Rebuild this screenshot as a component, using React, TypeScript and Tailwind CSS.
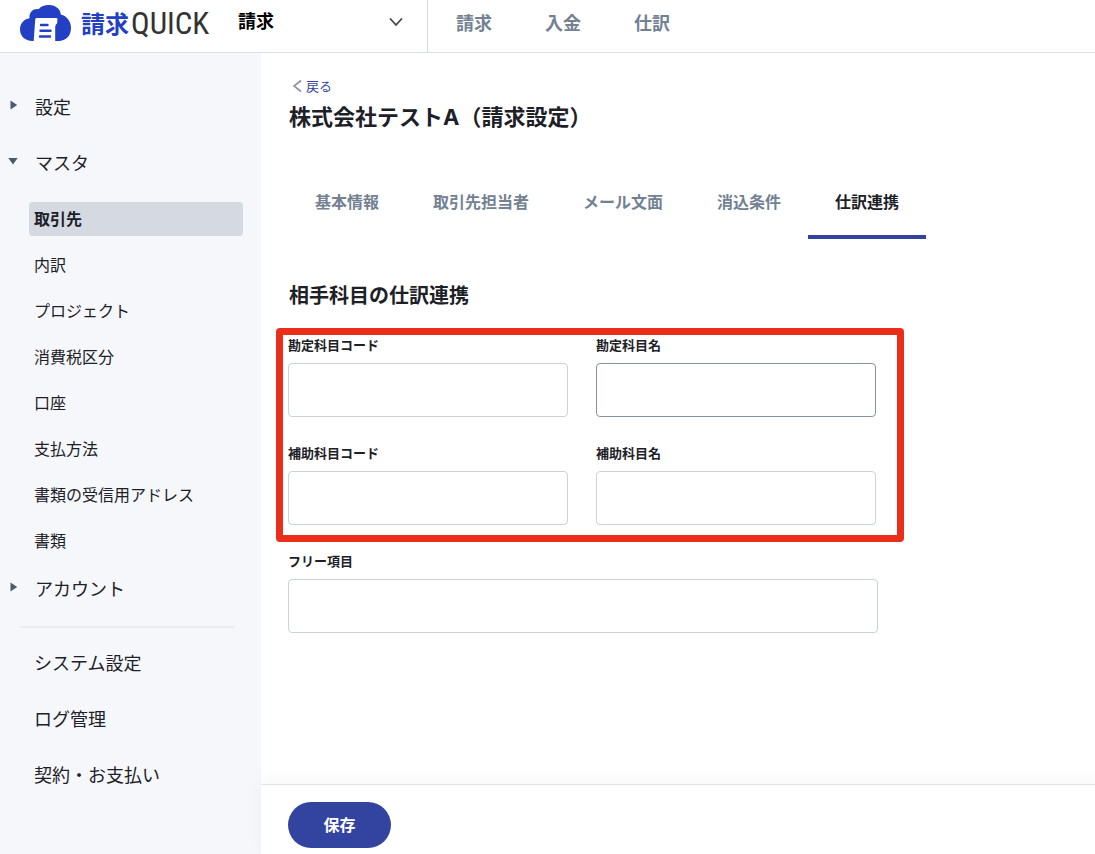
import { useState } from "react";

const masterItems = [
  "取引先",
  "内訳",
  "プロジェクト",
  "消費税区分",
  "口座",
  "支払方法",
  "書類の受信用アドレス",
  "書類",
];

const tabs = ["基本情報", "取引先担当者", "メール文面", "消込条件", "仕訳連携"];

function Logo() {
  return (
    <a href="#" aria-label="請求QUICK" className="flex h-[46px] w-[218px] shrink-0 items-center pl-5">
      <svg viewBox="0 0 51 36" className="h-9 w-[51px] shrink-0" aria-hidden="true">
        <path
          d="M12.5 36C5 36 0 31 0 24.5C0 18.500 4 14 9.500 13.200C9 7.500 13 3.500 18.500 4.200C21.500 .8 26 -.4 31 .2C36.500 .8 40.500 4.500 40.800 9.500C47 11 51 16.500 51 23C51 31 45.500 36 38.500 36Z"
          fill="#2340c4"
        />
        <path
          d="M16.500 13H36.500Q37.700 13 37.500 14.500L37 18.500Q35.200 19.500 35.200 22V36H13.700L15.200 14.500Q15.300 13 16.500 13Z"
          fill="#fff"
        />
        <path
          d="M21 20H27.500M20.500 25.700H30.500M20 31.500H30"
          fill="none"
          stroke="#2340c4"
          strokeWidth="2.400"
          strokeLinecap="round"
        />
      </svg>
      <span className="flex items-center gap-0.5 pl-2.5 leading-none whitespace-nowrap">
        <span className="text-2xl font-bold text-[#2340c4]">請求</span>
        <span className="font-['Roboto_Condensed','Liberation_Sans_Narrow','DejaVu_Sans_Condensed',sans-serif] text-[31px] text-[#333]">
          QUICK
        </span>
      </span>
    </a>
  );
}

function Header() {
  return (
    <header className="flex h-[53px] shrink-0 border-b border-[#dcdfe9] bg-white">
      <Logo />
      <div className="relative w-[210px] shrink-0 border-r border-[#d5d9e6]">
        <select
          aria-label="サービス"
          className="h-10 w-full appearance-none bg-transparent pl-5 text-lg font-bold text-black outline-none"
        >
          <option>請求</option>
        </select>
        <svg
          viewBox="0 0 14 8"
          className="pointer-events-none absolute top-[18px] right-6 h-2 w-3.5"
          fill="none"
          stroke="#444"
          strokeWidth="1.800"
          strokeLinecap="round"
          strokeLinejoin="round"
          aria-hidden="true"
        >
          <path d="M1.500 1L7 7L12.500 1" />
        </svg>
      </div>
      <nav className="flex h-11 items-center gap-[53px] pl-7 text-lg font-bold text-[#738192]">
        <a href="#">請求</a>
        <a href="#">入金</a>
        <a href="#">仕訳</a>
      </nav>
    </header>
  );
}

function Group({ label, open, onClick }: { label: string; open: boolean; onClick?: () => void }) {
  return (
    <button
      type="button"
      aria-expanded={open}
      onClick={onClick}
      className="flex h-14 w-full items-center pb-0.5 text-left text-lg"
    >
      <span className="flex w-[35px] shrink-0 pb-0.5 pl-2">
        <svg viewBox="0 0 10 10" className="size-2.5" fill="#4a5b6e" aria-hidden="true">
          {open ? <path d="M.3 2H9.700L5 8.500Z" /> : <path d="M2.500 .5L9.200 5L2.500 9.500Z" />}
        </svg>
      </span>
      {label}
    </button>
  );
}

function Sidebar() {
  const [open, setOpen] = useState(true);
  return (
    <aside className="w-[261px] shrink-0 bg-[#f5f7fb] pt-[26px] text-[#1d2127]">
      <Group label="設定" open={false} />
      <Group label="マスタ" open={open} onClick={() => setOpen(!open)} />
      {open && (
        <ul className="flex flex-col gap-3 pt-[11px] pr-[18px] pb-[3px] pl-[29px]">
          {masterItems.map((item, i) => (
            <li key={item}>
              <a
                href="#"
                className={
                  i === 0
                    ? "flex h-[34px] items-center rounded bg-[#d4d9e2] pb-[3px] pl-[5px] text-base font-bold"
                    : "flex h-[34px] items-center pb-[3px] pl-[5px] text-base"
                }
              >
                {item}
              </a>
            </li>
          ))}
        </ul>
      )}
      <Group label="アカウント" open={false} />
      <hr className="mt-[9px] mr-[27px] mb-[7px] ml-5 border-t-2 border-[#eaecf0]" />
      <nav className="flex flex-col text-lg">
        {["システム設定", "ログ管理", "契約・お支払い"].map((item) => (
          <a key={item} href="#" className="flex h-14 items-center pb-0.5 pl-[34px]">
            {item}
          </a>
        ))}
      </nav>
    </aside>
  );
}

function Field({ id, label, active = false }: { id: string; label: string; active?: boolean }) {
  return (
    <div className="flex flex-col gap-[9px]">
      <label htmlFor={id} className="text-[13px] leading-[18px] font-bold">
        {label}
      </label>
      <input
        id={id}
        type="text"
        className={
          active
            ? "h-[54px] w-full rounded border border-[#8692a3] bg-white px-4 text-base outline-none"
            : "h-[54px] w-full rounded border border-[#cdd1dc] bg-white px-4 text-base outline-none"
        }
      />
    </div>
  );
}

export default function App() {
  return (
    <div className="flex min-h-screen flex-col bg-white font-['Noto_Sans_CJK_JP',sans-serif] text-[#1d2127]">
      <Header />
      <div className="flex grow">
        <Sidebar />
        <form className="flex min-w-0 grow flex-col" onSubmit={(e) => e.preventDefault()}>
          <main className="grow px-7 pt-[23px]">
            <a href="#" className="flex w-fit items-center gap-1 pl-[3px] text-[13px] leading-5 text-[#3346a6]">
              <svg
                viewBox="0 0 10 14"
                className="h-3.5 w-2.5"
                fill="none"
                stroke="#8a93a0"
                strokeWidth="1.600"
                aria-hidden="true"
              >
                <path d="M9 1.500L2 7L9 12.500" />
              </svg>
              戻る
            </a>
            <h1 className="pt-[5px] font-['Inter','Noto_Sans_CJK_JP',sans-serif] text-[22px] leading-8 font-bold">
              株式会社テストA（請求設定）
            </h1>
            <div role="tablist" className="-ml-px flex pt-[34px]">
              {tabs.map((tab, i) => (
                <button
                  key={tab}
                  type="button"
                  role="tab"
                  aria-selected={i === 4}
                  className={
                    i === 4
                      ? "h-[72px] border-b-4 border-[#3244a0] px-[27px] text-base font-bold whitespace-nowrap"
                      : "h-[72px] border-b-4 border-transparent px-[27px] text-base font-bold whitespace-nowrap text-[#738192]"
                  }
                >
                  {tab}
                </button>
              ))}
            </div>
            <h2 className="pt-10 text-xl leading-8 font-bold">相手科目の仕訳連携</h2>
            <div className="-ml-px max-w-[590px] pt-[25px]">
              <div className="relative mr-0.5 grid grid-cols-2 gap-x-7 gap-y-[27px]">
                <Field id="account-code" label="勘定科目コード" />
                <Field id="account-name" label="勘定科目名" active />
                <Field id="sub-code" label="補助科目コード" />
                <Field id="sub-name" label="補助科目名" />
                <div className="pointer-events-none absolute -top-2 -right-7 -bottom-[17px] -left-3 rounded-sm border-7 border-[#ea2e1a]" />
              </div>
              <div className="pt-[27px]">
                <Field id="free" label="フリー項目" />
              </div>
            </div>
          </main>
          <footer className="border-t border-[#e3e5ee] bg-white px-[27px] pt-[17px] pb-1.5 shadow-[0_-4px_16px_rgba(0,0,0,0.04)]">
            <button
              type="submit"
              className="h-[46px] w-[103px] rounded-full bg-[#3244a0] pb-0.5 text-base font-bold text-white"
            >
              保存
            </button>
          </footer>
        </form>
      </div>
    </div>
  );
}
